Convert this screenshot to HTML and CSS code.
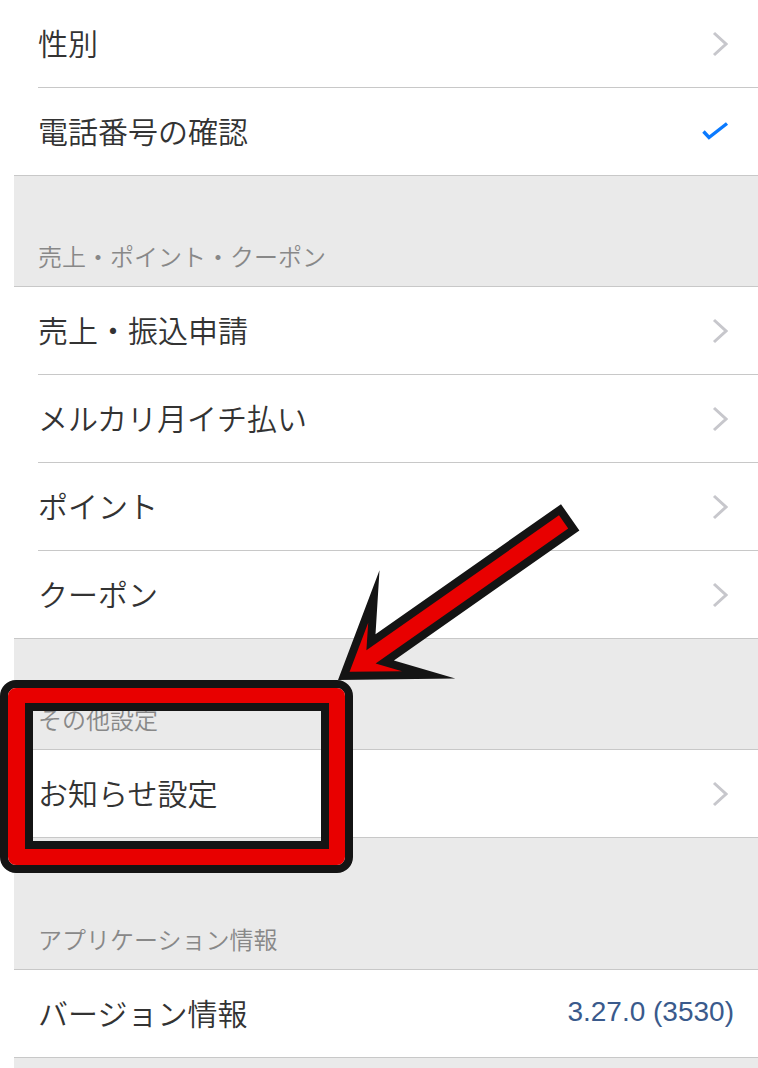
FILE: index.html
```html
<!DOCTYPE html>
<html lang="ja">
<head>
    <meta charset="UTF-8">
    <meta name="viewport" content="width=device-width, initial-scale=1.0">
    <title>設定</title>
    <link rel="stylesheet" href="styles.css">
</head>
<body>
    <div class="settings">
        <section class="group group-first">
            <div class="row">
                <span class="label">性別</span>
                <svg class="chevron" width="16" height="26" viewBox="0 0 16 26"><polyline points="2,2 14,13 2,24"/></svg>
            </div>
            <div class="row">
                <span class="label">電話番号の確認</span>
                <svg class="check" width="28" height="22" viewBox="0 0 28 22"><polyline points="2.5,10.5 8,16.5 26,2.5"/></svg>
            </div>
        </section>

        <div class="group-head">売上・ポイント・クーポン</div>
        <section class="group">
            <div class="row">
                <span class="label">売上・振込申請</span>
                <svg class="chevron" width="16" height="26" viewBox="0 0 16 26"><polyline points="2,2 14,13 2,24"/></svg>
            </div>
            <div class="row">
                <span class="label">メルカリ月イチ払い</span>
                <svg class="chevron" width="16" height="26" viewBox="0 0 16 26"><polyline points="2,2 14,13 2,24"/></svg>
            </div>
            <div class="row">
                <span class="label">ポイント</span>
                <svg class="chevron" width="16" height="26" viewBox="0 0 16 26"><polyline points="2,2 14,13 2,24"/></svg>
            </div>
            <div class="row">
                <span class="label">クーポン</span>
                <svg class="chevron" width="16" height="26" viewBox="0 0 16 26"><polyline points="2,2 14,13 2,24"/></svg>
            </div>
        </section>

        <div class="group-head">その他設定</div>
        <section class="group">
            <div class="row">
                <span class="label">お知らせ設定</span>
                <svg class="chevron" width="16" height="26" viewBox="0 0 16 26"><polyline points="2,2 14,13 2,24"/></svg>
            </div>
        </section>

        <div class="group-head group-head-tall">アプリケーション情報</div>
        <section class="group">
            <div class="row row-value">
                <span class="label">バージョン情報</span>
                <span class="value">3.27.0 (3530)</span>
            </div>
        </section>
    </div>

    <!-- annotation -->
    <div class="mark">
        <div class="mark-red">
            <div class="mark-inner"></div>
        </div>
    </div>
    <svg class="arrow" width="758" height="1068" viewBox="0 0 758 1068">
        <polygon class="arrow-out" points="338,680 379.5,570.2 375.5,634.2 561,504.2 579.4,530.4 393.9,660.4 455.3,678.4"/>
        <polygon class="arrow-in" points="349.6,671.8 368.2,622.8 366.4,650.3 559,515.3 568.2,528.5 375.6,663.5 402,671.2"/>
    </svg>
</body>
</html>
```

FILE: styles.css
```css
* {
    margin: 0;
    padding: 0;
    box-sizing: border-box;
}

body {
    position: relative;
    width: 758px;
    height: 1068px;
    overflow: hidden;
    background-color: #fff;
    font-family: "Noto Sans CJK JP", "Liberation Sans", sans-serif;
    font-weight: 350;
    color: #333;
}

.settings {
    margin-left: 14px;
    min-height: 1068px;
    background-color: #eaeaea;
}

.group {
    background-color: #fff;
    border-top: 1px solid #c8c8c8;
    border-bottom: 1px solid #c8c8c8;
}

.group-first {
    border-top: none;
}

.row {
    display: flex;
    align-items: center;
    justify-content: space-between;
    height: 88px;
    margin-left: 24px;
    padding-right: 30px;
    border-bottom: 1px solid #c8c8c8;
}

.row:last-child {
    height: 87px;
    border-bottom: none;
}

.label {
    padding-bottom: 4px;
    font-size: 30px;
    line-height: 40px;
}

.chevron polyline {
    fill: none;
    stroke: #c7c7cc;
    stroke-width: 3;
}

.check {
    margin-right: -1px;
}

.check polyline {
    fill: none;
    stroke: #0a7aff;
    stroke-width: 3.4;
    stroke-linejoin: miter;
}

.row-value {
    padding-right: 24px;
}

.value {
    padding-bottom: 3px;
    font-family: "Liberation Sans", sans-serif;
    font-weight: 400;
    font-size: 28px;
    color: #3a5a8c;
}

.group-head {
    display: flex;
    align-items: flex-end;
    height: 110px;
    padding-left: 24px;
    padding-bottom: 14px;
    font-size: 24px;
    line-height: 32px;
    color: #888;
}

.group-head-tall {
    height: 131px;
}

.mark {
    position: absolute;
    left: 0;
    top: 680px;
    width: 353px;
    height: 193px;
    border: 8px solid #141414;
    border-radius: 16px;
}

.mark-red {
    height: 100%;
    border-style: solid;
    border-color: #e80000;
    border-width: 15px 16px 16px 17px;
    border-radius: 8px;
}

.mark-inner {
    height: 100%;
    border: 8px solid #141414;
}

.arrow {
    position: absolute;
    left: 0;
    top: 0;
    pointer-events: none;
}

.arrow-out {
    fill: #141414;
}

.arrow-in {
    fill: #e80000;
}
```
